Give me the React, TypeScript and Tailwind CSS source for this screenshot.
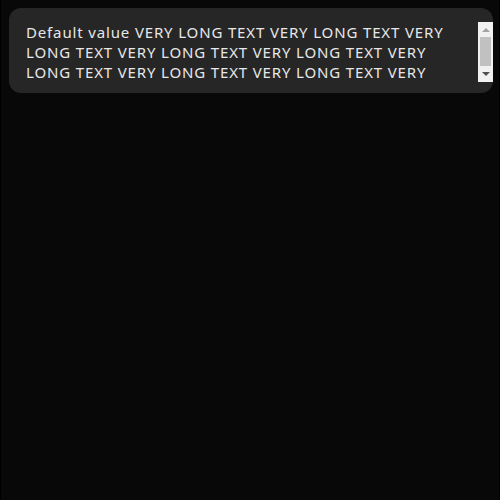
import React from "react";

const LONG_VALUE =
  "Default value " + Array.from({ length: 12 }, () => "VERY LONG TEXT").join(" ");

// headless page hides native scrollbars, so the classic one is drawn by hand
const FakeScrollbar: React.FC = () => (
  <div className="flex w-[15px] h-[60px] shrink-0 flex-col items-center bg-[#f1f1f1]">
    <div className="flex h-[15px] w-full items-center justify-center">
      <div className="h-0 w-0 border-x-[4px] border-b-[4px] border-x-transparent border-b-[#a3a3a3]" />
    </div>
    <div className="h-[29px] w-[11px] bg-[#c1c1c1]" />
    <div className="flex flex-1 w-full items-center justify-center">
      <div className="h-0 w-0 border-x-[4px] border-t-[4px] border-x-transparent border-t-[#505050]" />
    </div>
  </div>
);

export default function App() {
  return (
    <div className="min-h-screen bg-[#080808] border-x border-black pt-2 pl-2 pr-[6px]">
      <div className="flex rounded-xl bg-[#262626] pl-[17px] pt-[14px] pb-[11px]">
        <textarea
          readOnly
          rows={3}
          defaultValue={LONG_VALUE}
          className="block flex-1 h-[60px] resize-none overflow-hidden bg-transparent pr-[8px] text-[15px] leading-5 tracking-[0.85px] text-[#e8e8e8] outline-none"
          style={{ fontFamily: '"Noto Sans", "DejaVu Sans", sans-serif' }}
        />
        <FakeScrollbar />
      </div>
    </div>
  );
}
